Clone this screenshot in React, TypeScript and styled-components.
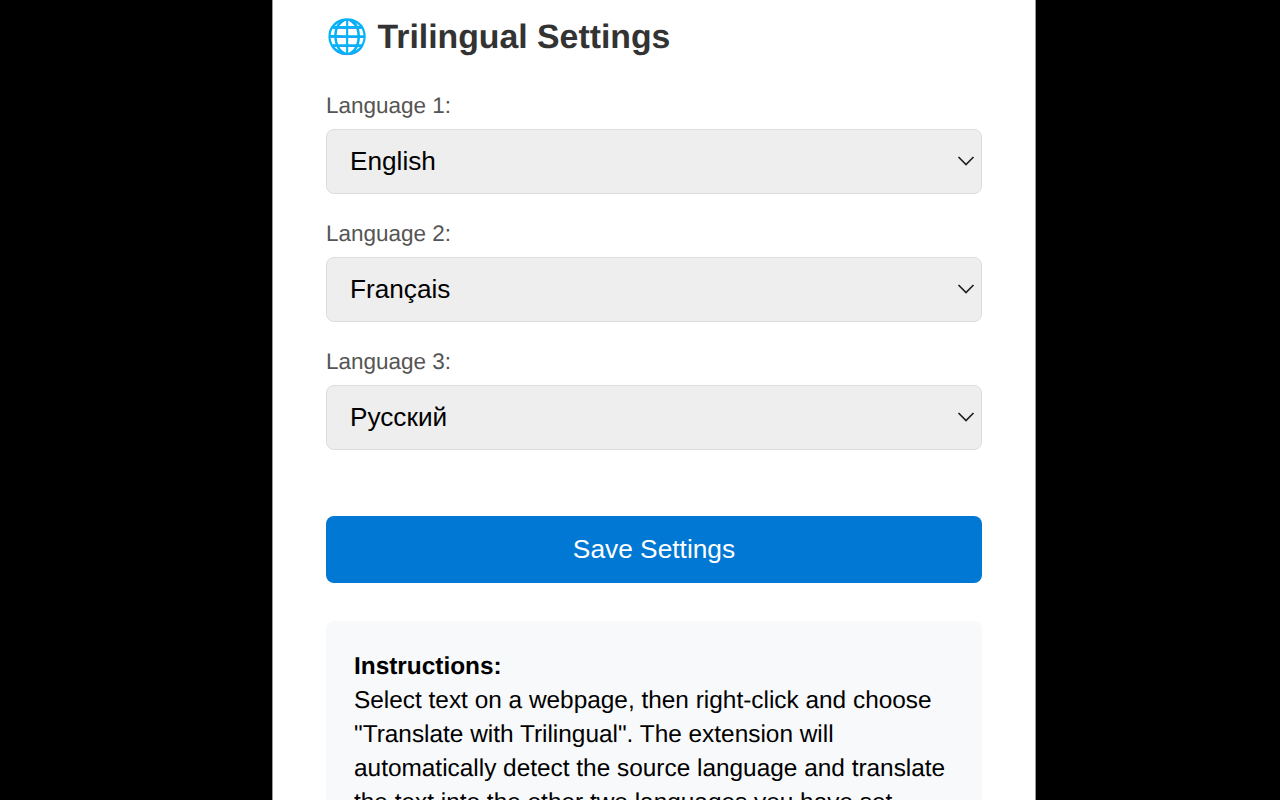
import styled, { createGlobalStyle } from 'styled-components'

const GlobalStyle = createGlobalStyle`
  html, body {
    margin: 0;
    height: 100%;
    overflow: hidden;
    background: #000;
    font-family: "Liberation Sans", Arial, sans-serif;
    text-rendering: geometricPrecision;
  }
`

const Page = styled.div`
  height: 800px;
  overflow: hidden;
  display: flex;
  justify-content: center;
  padding-left: 28px;
`

const Card = styled.main`
  box-sizing: border-box;
  width: 764px;
  height: fit-content;
  padding: 14.5px 53px 40px;
  background: #fff;
  border-left: 1px solid #999;
  border-right: 1px solid #999;
`

const Title = styled.h1`
  margin: 0 0 33.5px;
  font-size: 33.8px;
  line-height: 44px;
  font-weight: 700;
  color: #333;
`

const Field = styled.div`
  margin-bottom: 26.2px;
`

const Label = styled.label`
  display: block;
  margin-bottom: 9px;
  font-size: 22.5px;
  line-height: 28px;
  color: #555;
`

const SelectWrap = styled.div`
  position: relative;
`

const Select = styled.select`
  display: block;
  box-sizing: border-box;
  width: 100%;
  height: 65px;
  padding: 0 22px 2px 23px;
  font-family: inherit;
  font-size: 26.2px;
  color: #000;
  background: #eee;
  border: 1.5px solid #ddd;
  border-radius: 8px;
  appearance: none;
`

const Chevron = styled.svg`
  position: absolute;
  top: 26px;
  right: 7px;
  width: 18px;
  height: 12px;
  pointer-events: none;
`

const SaveButton = styled.button`
  display: block;
  width: 100%;
  height: 67px;
  margin-top: 66px;
  font-family: inherit;
  font-size: 26.3px;
  color: #fff;
  background: #0078d4;
  border: none;
  border-radius: 8px;
`

const Instructions = styled.section`
  margin-top: 38px;
  padding: 29px 28px 28px;
  font-size: 24.4px;
  line-height: 34px;
  color: #000;
  background: #f8f9fa;
  border-radius: 8px;
`

const options = ['English', 'Français', 'Русский']

const languages = [
  { label: 'Language 1:', id: 'lang1', value: 'English' },
  { label: 'Language 2:', id: 'lang2', value: 'Français' },
  { label: 'Language 3:', id: 'lang3', value: 'Русский' },
]

export default function App() {
  return (
    <>
      <GlobalStyle />
      <Page>
        <Card>
          <Title>🌐 Trilingual Settings</Title>
          {languages.map((lang) => (
            <Field key={lang.id}>
              <Label htmlFor={lang.id}>{lang.label}</Label>
              <SelectWrap>
                <Select id={lang.id} defaultValue={lang.value}>
                  {options.map((opt) => (
                    <option key={opt} value={opt}>
                      {opt}
                    </option>
                  ))}
                </Select>
                <Chevron viewBox="0 0 18 12" fill="none" stroke="#222" strokeWidth="1.7">
                  <path d="M1.5 2 L9 9.5 L16.500 2" />
                </Chevron>
              </SelectWrap>
            </Field>
          ))}
          <SaveButton>Save Settings</SaveButton>
          <Instructions>
            <strong>Instructions:</strong>
            <br />
            Select text on a webpage, then right-click and choose "Translate with Trilingual". The extension will
            automatically detect the source language and translate the text into the other two languages you have set.
          </Instructions>
        </Card>
      </Page>
    </>
  )
}
